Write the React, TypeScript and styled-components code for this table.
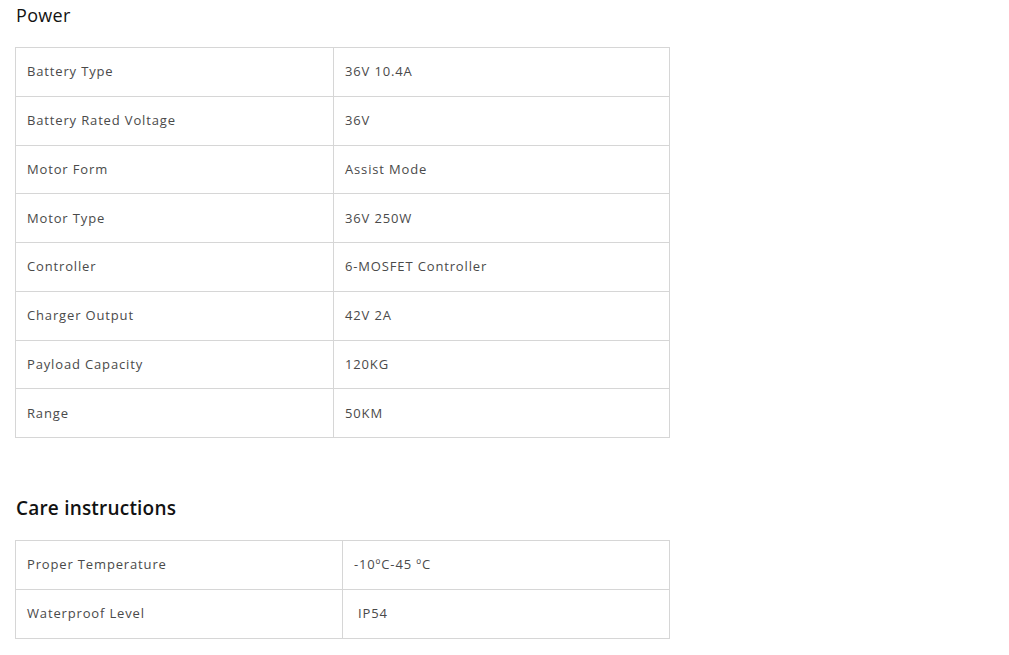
import React from "react";
import styled, { createGlobalStyle } from "styled-components";

const Global = createGlobalStyle`
  html, body { margin: 0; padding: 0; background: #fff; }
  body { font-family: "Open Sans", "Liberation Sans", sans-serif; }
`;

const Page = styled.div`
  padding: 0 0 0 15px;
  width: 655px;
`;

const Heading = styled.h2<{ $bold?: boolean }>`
  margin: 0;
  font-size: ${(p) => (p.$bold ? "19px" : "18px")};
  font-weight: ${(p) => (p.$bold ? 600 : 400)};
  letter-spacing: ${(p) => (p.$bold ? "0.2px" : "0.3px")};
  color: #121212;
  line-height: 24px;
  padding-left: 1px;
`;

const Table = styled.div`
  border: 1px solid #d6d6d6;
  border-bottom: none;
  display: flex;
  flex-direction: column;
`;

const Row = styled.div<{ $split: number }>`
  display: grid;
  grid-template-columns: ${(p) => p.$split}px 1fr;
  height: 48.75px;
  box-sizing: border-box;
  border-bottom: 1px solid #d6d6d6;
`;

const Cell = styled.div<{ $first?: boolean; $indent?: number }>`
  display: flex;
  align-items: center;
  padding-left: ${(p) => (p.$indent ?? 11)}px;
  padding-bottom: 1px;
  font-size: 13px;
  letter-spacing: 0.85px;
  color: #4a4a4a;
  border-right: ${(p) => (p.$first ? "1px solid #d6d6d6" : "none")};
`;

const PowerSection = styled.section`
  padding-top: 3px;
  display: flex;
  flex-direction: column;
  gap: 20px;
`;

const CareSection = styled.section`
  padding-top: 58px;
  display: flex;
  flex-direction: column;
  gap: 20px;
`;

const power: [string, string][] = [
  ["Battery Type", "36V 10.4A"],
  ["Battery Rated Voltage", "36V"],
  ["Motor Form", "Assist Mode"],
  ["Motor Type", "36V 250W"],
  ["Controller", "6-MOSFET Controller"],
  ["Charger Output", "42V 2A"],
  ["Payload Capacity", "120KG"],
  ["Range", "50KM"],
];

const care: [string, string, number][] = [
  ["Proper Temperature", "-10\u00BAC-45 \u00BAC", 11],
  ["Waterproof Level", "IP54", 15],
];

export default function App() {
  return (
    <>
      <Global />
      <Page>
        <PowerSection>
          <Heading>Power</Heading>
          <Table>
            {power.map(([k, v]) => (
              <Row key={k} $split={318}>
                <Cell $first>{k}</Cell>
                <Cell>{v}</Cell>
              </Row>
            ))}
          </Table>
        </PowerSection>
        <CareSection>
          <Heading $bold>Care instructions</Heading>
          <Table>
            {care.map(([k, v, ind]) => (
              <Row key={k} $split={327}>
                <Cell $first>{k}</Cell>
                <Cell $indent={ind}>{v}</Cell>
              </Row>
            ))}
          </Table>
        </CareSection>
      </Page>
    </>
  );
}
